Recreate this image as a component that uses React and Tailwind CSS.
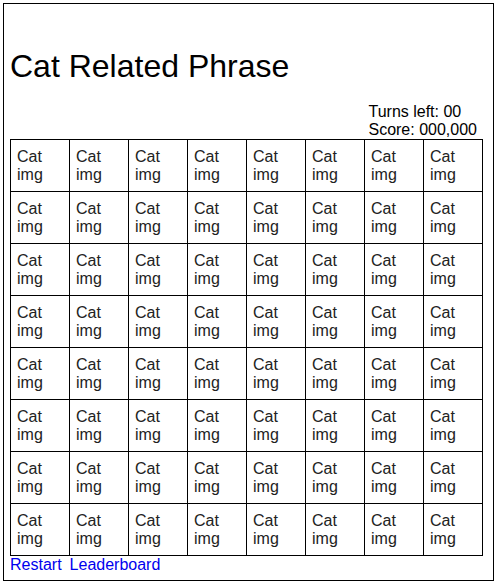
import React from 'react';

const ROWS = 8;
const COLS = 8;

const App = () => {
    const cells = [];
    for (let i = 0; i < ROWS * COLS; i++) {
        cells.push(
            <div key={i} className="h-[52px] border-r border-b border-black pl-[6px] pt-[8px] leading-[18px] text-[#222]">
                Cat img
            </div>
        );
    }

    return (
        <div className="p-[3px] font-['Liberation_Sans',Arial,sans-serif] text-black text-[16px]">
            <div className="border border-black w-[491px] h-[578px] pl-[6px]">
                {/* Title */}
                <h1 className="mt-[44px] text-[32px] leading-[37px] font-normal">Cat Related Phrase</h1>

                {/* Stats */}
                <div className="w-[473px] flex justify-end pr-[6px] mt-[18px]">
                    <div className="leading-[18px]">
                        <div>Turns left: 00</div>
                        <div>Score: 000,000</div>
                    </div>
                </div>

                {/* Board */}
                <div className="w-[473px] grid grid-cols-[repeat(8,59px)] border-l border-t border-black">
                    {cells}
                </div>

                {/* Links */}
                <div className="flex gap-2 text-[#0000ee] leading-[18px]">
                    <a href="#" className="no-underline">Restart</a>
                    <a href="#" className="no-underline">Leaderboard</a>
                </div>
            </div>
        </div>
    );
};

export default App;
